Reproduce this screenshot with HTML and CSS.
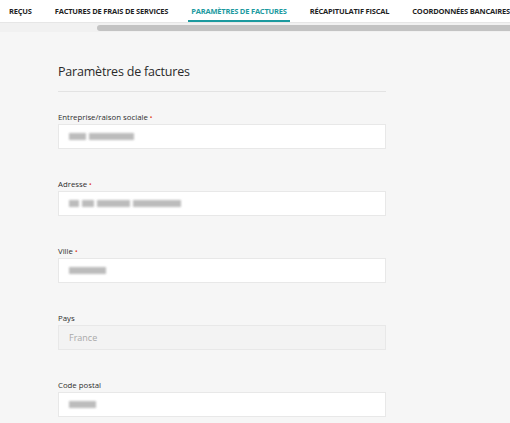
FILE: index.html
```html
<!DOCTYPE html>
<html lang="fr">
<head>
<meta charset="utf-8">
<link rel="stylesheet" href="styles.css">
</head>
<body>
<nav class="tabs">
  <a class="tab">REÇUS</a>
  <a class="tab">FACTURES DE FRAIS DE SERVICES</a>
  <a class="tab active">PARAMÈTRES DE FACTURES</a>
  <a class="tab">RÉCAPITULATIF FISCAL</a>
  <a class="tab">COORDONNÉES BANCAIRES</a>
</nav>
<div class="scroll-track"><div class="scroll-thumb"></div></div>
<main class="content">
  <h1 class="title">Paramètres de factures</h1>
  <div class="sep"></div>
  <div class="field">
    <div class="label">Entreprise/raison sociale <span class="req">•</span></div>
    <div class="input"><span class="blur" style="width:17px"></span><span class="blur" style="width:45px"></span></div>
  </div>
  <div class="field">
    <div class="label">Adresse <span class="req">•</span></div>
    <div class="input"><span class="blur" style="width:10px"></span><span class="blur" style="width:12px"></span><span class="blur" style="width:33px"></span><span class="blur" style="width:48px"></span></div>
  </div>
  <div class="field">
    <div class="label">Ville <span class="req">•</span></div>
    <div class="input"><span class="blur" style="width:37px"></span></div>
  </div>
  <div class="field">
    <div class="label">Pays</div>
    <div class="input disabled"><span class="value">France</span></div>
  </div>
  <div class="field">
    <div class="label">Code postal</div>
    <div class="input"><span class="blur" style="width:27px"></span></div>
  </div>
</main>
</body>
</html>
```
FILE: styles.css
```css
html, body {
  margin: 0;
  padding: 0;
}
body {
  background: #f6f6f6;
  font-family: "Open Sans", "Noto Sans", sans-serif;
  color: #262626;
  width: 510px;
  height: 423px;
  overflow: hidden;
}
.tabs {
  display: flex;
  gap: 17px;
  height: 22px;
  padding: 0 6px;
  background: #fff;
  border-bottom: 1px solid #e6e6e6;
  white-space: nowrap;
}
.tab {
  display: flex;
  align-items: center;
  padding: 1px 3px 0;
  font-size: 7.5px;
  letter-spacing: -0.2px;
  font-weight: 700;
  color: #1f1f1f;
  border-bottom: 2px solid transparent;
  box-sizing: border-box;
  height: 22px;
}
.tab.active {
  color: #1c9a9f;
  border-bottom-color: #1c9a9f;
}
.scroll-track {
  height: 9px;
  padding: 2px 0 0 97px;
  box-sizing: border-box;
  background: #f1f1f1;
}
.scroll-thumb {
  height: 6px;
  border-radius: 3px 0 0 3px;
  background: #c3c3c3;
}
.content {
  padding: 32px 0 0 58px;
  width: 328px;
}
.title {
  margin: 0;
  font-size: 12.5px;
  letter-spacing: -0.2px;
  line-height: 16px;
  font-weight: 400;
  color: #2a2a2a;
}
.sep {
  height: 1px;
  background: #e3e3e3;
  margin: 11px 0 20px;
}
.field {
  margin-bottom: 30px;
}
.field:last-child {
  margin-bottom: 0;
}
.label {
  font-size: 7.8px;
  height: 10px;
  line-height: 10px;
  color: #2e2e2e;
  margin-bottom: 2px;
}
.req {
  color: #e0452c;
  font-size: 7px;
  line-height: 0;
}
.input {
  height: 25px;
  box-sizing: border-box;
  background: #fff;
  border: 1px solid #e8e8e8;
  display: flex;
  align-items: center;
  gap: 3px;
  padding-left: 10px;
}
.input.disabled {
  background: #f3f3f3;
}
.value {
  font-size: 9px;
  color: #a9a9a9;
}
.blur {
  display: block;
  height: 7px;
  background: #acacac;
  filter: blur(1px);
  opacity: 0.8;
}
```
